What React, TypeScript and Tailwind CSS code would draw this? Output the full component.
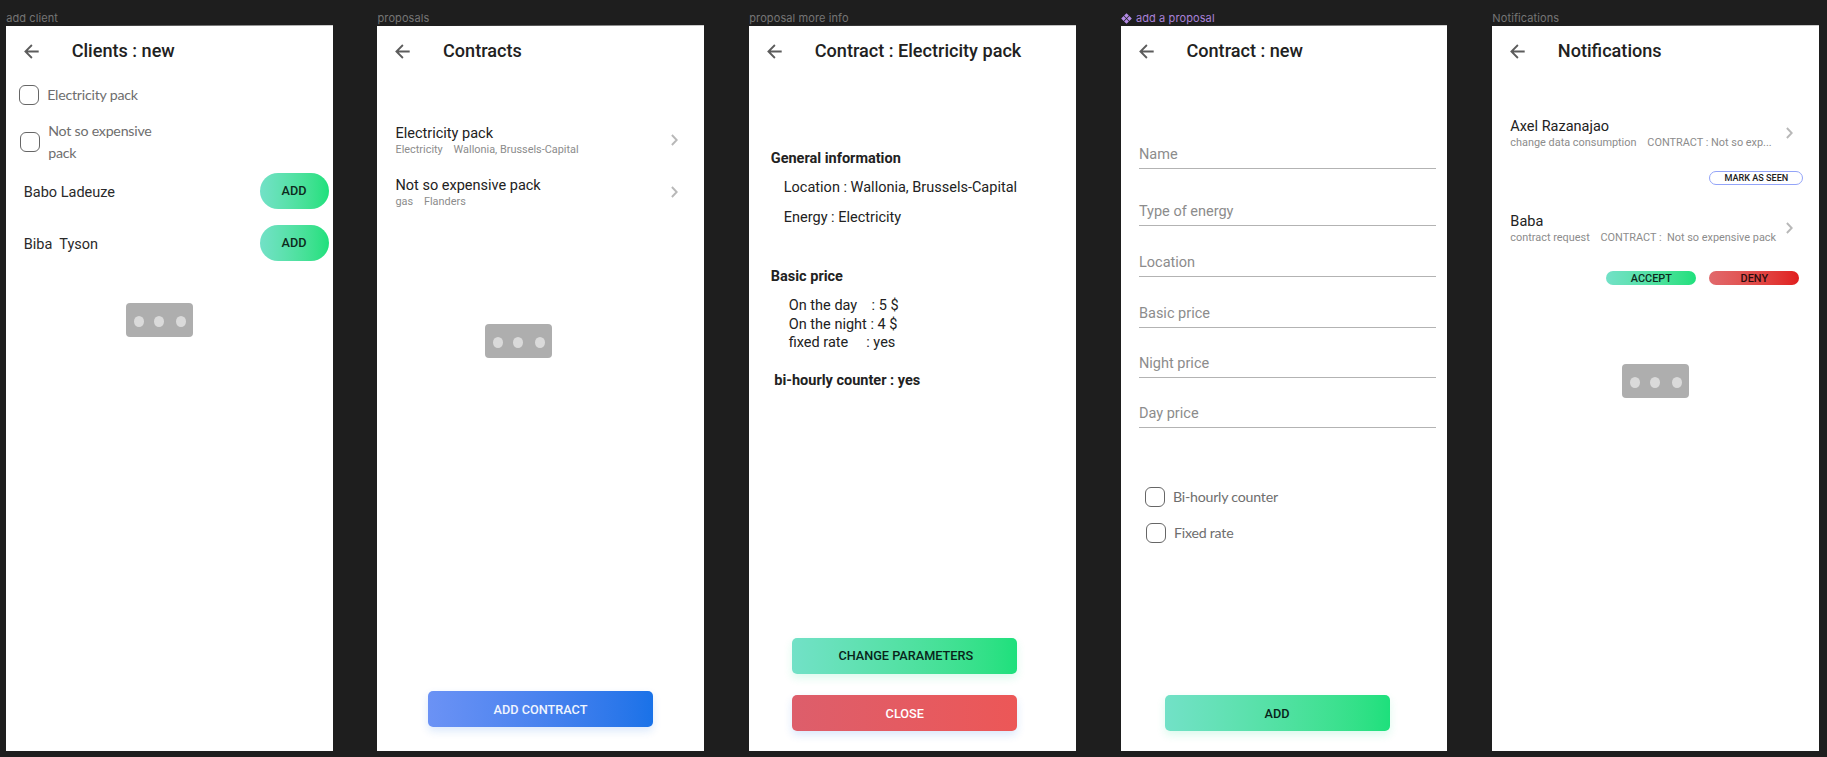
import React from "react";
import clsx from "clsx";

function BackArrow() {
  return (
    <svg className="h-[15px] w-[15px] shrink-0" viewBox="0 0 15 15" fill="none" stroke="#5c5c5c" strokeWidth="1.8">
      <path d="M14.7 7.5H1.6M7.9 1 1.4 7.5l6.5 6.5" />
    </svg>
  );
}

function Chevron() {
  return (
    <svg className="h-3 w-[7px] shrink-0" viewBox="0 0 7 12" fill="none" stroke="#b8b8b8" strokeWidth="1.9">
      <path d="M.9 1 5.7 6 .9 11" />
    </svg>
  );
}

function ComponentIcon() {
  return (
    <svg className="mr-1 h-[11px] w-[11px] shrink-0" viewBox="0 0 11 11" fill="#b48be6">
      <path d="M5.5.2 7.9 2.6 5.5 5 3.1 2.6zM5.5 6l2.4 2.4-2.4 2.4-2.4-2.4zM2.6 3.1 5 5.5 2.6 7.9.2 5.5zM8.4 3.1l2.4 2.4-2.4 2.4L6 5.5z" />
    </svg>
  );
}

type FrameProps = {
  label: string;
  title: string;
  component?: boolean;
  children: React.ReactNode;
};

function Frame({ label, title, component, children }: FrameProps) {
  return (
    <section className="flex w-[326.4px] flex-col">
      <div
        className={clsx(
          "flex h-[25px] items-center pt-[11px] font-['Inter'] text-[11px] leading-[14px] tracking-[0.1px]",
          component ? "text-[#a981d8]" : "text-[#757575]",
        )}
      >
        {component && <ComponentIcon />}
        {label}
      </div>
      <div className="h-px bg-linear-to-r from-[#1e1e1e] from-20% to-[#d0d0d0]" />
      <div className="flex h-[725px] flex-col bg-white">
        <header className="flex h-[50px] shrink-0 items-center pl-[18px]">
          <BackArrow />
          <h1 className="ml-[32.5px] text-[18.1px] font-medium leading-6 text-[#212121]">{title}</h1>
        </header>
        {children}
      </div>
    </section>
  );
}

function Checkbox({ label, className }: { label: string; className: string }) {
  return (
    <label className={clsx("flex items-center gap-2", className)}>
      <span className="h-5 w-5 shrink-0 rounded-[6px] border border-[#666]" />
      <span className="w-[120px] font-['Lato'] text-[14.2px] leading-[22px] tracking-[-0.23px] text-[#6e6e6e]">{label}</span>
    </label>
  );
}

function Client({ name, className }: { name: string; className: string }) {
  return (
    <div className={clsx("flex h-9 items-center justify-between pl-[17.6px] pr-1", className)}>
      <span className="whitespace-pre pt-1 text-[14.5px] leading-5 text-[#2a2a2a]">{name}</span>
      <button className="h-9 w-[69px] rounded-full bg-linear-to-r from-[#72e1c7] to-[#1de07c] text-[12.7px] font-medium text-[#0d2b1d]">
        ADD
      </button>
    </div>
  );
}

function Loader({ className }: { className: string }) {
  return (
    <div className={clsx("flex h-[34px] w-[67px] shrink-0 items-center rounded-[4px] bg-[#aeaeae] pl-2 pt-[2px]", className)}>
      <span className="h-[11px] w-[10px] rounded-[50%] bg-[#dadada]" />
      <span className="ml-[10px] h-[11px] w-[10px] rounded-[50%] bg-[#dadada]" />
      <span className="ml-3 h-[11px] w-[10px] rounded-[50%] bg-[#dadada]" />
    </div>
  );
}

function ListItem({ title, detail, className }: { title: string; detail: string; className: string }) {
  return (
    <div className={clsx("flex h-[34px] shrink-0 items-center justify-between pl-[18px]", className)}>
      <div className="whitespace-pre">
        <div className="h-5 text-[14.5px] leading-[22px] text-[#222]">{title}</div>
        <div className="text-[10.9px] leading-[14px] text-[#8c8c8c]">{detail}</div>
      </div>
      <Chevron />
    </div>
  );
}

function Field({ label, className }: { label: string; className: string }) {
  return (
    <div className={clsx("ml-[18px] w-[297px] shrink-0 border-b border-[#b3b3b3]", className)}>
      <div className="h-6 text-[14.5px] leading-[22px] text-[#8c8c8c]">{label}</div>
    </div>
  );
}

function WideButton({ label, className }: { label: string; className: string }) {
  return (
    <button className={clsx("h-9 w-[225px] shrink-0 rounded-[5px] bg-linear-to-r text-[12.7px] font-medium", className)}>
      {label}
    </button>
  );
}

export default function App() {
  return (
    <main className="grid h-[757px] w-[1827px] grid-cols-[371.3px_371.8px_371.7px_371.4px_327px] overflow-hidden bg-[#1e1e1e] pl-[6.2px] font-['Roboto',sans-serif]">
      <Frame label="add client" title="Clients : new">
        <Checkbox label="Electricity pack" className="ml-[13px] mt-2 h-[22px]" />
        <Checkbox label="Not so expensive pack" className="ml-[14px] mt-[25px] h-[22px]" />
        <Client name="Babo Ladeuze" className="mt-5" />
        <Client name="Biba  Tyson" className="mt-4" />
        <Loader className="ml-[120px] mt-[42px]" />
      </Frame>

      <Frame label="proposals" title="Contracts">
        <ListItem title="Electricity pack" detail="Electricity    Wallonia, Brussels-Capital" className="mt-[47px] pr-[26px]" />
        <ListItem title="Not so expensive pack" detail="gas    Flanders" className="mt-[18px] pr-[26px]" />
        <Loader className="ml-[107.5px] mt-[115px]" />
        <WideButton
          label="ADD CONTRACT"
          className="mb-6 ml-[50.5px] mt-auto from-[#6b92f5] to-[#1972e8] pt-px text-[#f0f5ff] shadow-[0_4px_8px_rgba(25,114,232,0.16)]"
        />
      </Frame>

      <Frame label="proposal more info" title="Contract : Electricity pack">
        <div className="mt-[73px] flex flex-col whitespace-pre text-[14.5px] leading-5 text-[#222]">
          <h2 className="ml-[21.5px] font-bold">General information</h2>
          <p className="ml-[34.5px] mt-[9px]">Location : Wallonia, Brussels-Capital</p>
          <p className="ml-[34.5px] mt-[10px]">Energy : Electricity</p>
          <h2 className="ml-[21.5px] mt-[39px] font-bold">Basic price</h2>
          <div className="ml-[39.5px] mt-[10px] leading-[18.7px]">
            <p>On the day    : 5 $</p>
            <p>On the night : 4 $</p>
            <p>fixed rate     : yes</p>
          </div>
          <p className="ml-[25px] mt-[18px] font-bold">bi-hourly counter : yes</p>
        </div>
        <WideButton
          label="CHANGE PARAMETERS"
          className="ml-[43px] mt-auto from-[#72e1c7] to-[#1de07c] pl-[2px] text-[#08251a] shadow-[0_4px_8px_rgba(29,224,140,0.16)]"
        />
        <WideButton
          label="CLOSE"
          className="mb-5 ml-[43px] mt-[21px] from-[#dd5e6b] to-[#ec5757] pt-px text-white shadow-[0_4px_8px_rgba(25,114,232,0.16)]"
        />
      </Frame>

      <Frame label="add a proposal" title="Contract : new" component>
        <Field label="Name" className="mt-[68px]" />
        <Field label="Type of energy" className="mt-8" />
        <Field label="Location" className="mt-[26px]" />
        <Field label="Basic price" className="mt-[26px]" />
        <Field label="Night price" className="mt-[25px]" />
        <Field label="Day price" className="mt-[25px]" />
        <Checkbox label="Bi-hourly counter" className="ml-6 mt-[58px] h-[22px]" />
        <Checkbox label="Fixed rate" className="ml-[25px] mt-[14px] h-[22px]" />
        <WideButton
          label="ADD"
          className="mb-5 ml-11 mt-auto from-[#72e1c7] to-[#1de07c] pr-px pt-px text-[#08251a] shadow-[0_4px_8px_rgba(29,224,140,0.16)]"
        />
      </Frame>

      <Frame label="Notifications" title="Notifications">
        <ListItem title="Axel Razanajao" detail="change data consumption    CONTRACT : Not so exp..." className="mt-10 pr-[26px]" />
        <button className="ml-[217px] mt-[21px] h-[14px] w-[94px] shrink-0 rounded-full border border-[#93a4f8] text-[9.1px] font-medium leading-3 text-[#222]">
          MARK AS SEEN
        </button>
        <ListItem title="Baba" detail="contract request    CONTRACT :  Not so expensive pack" className="mt-[26px] pr-[26px]" />
        <div className="mt-[26px] flex gap-[13px] pl-[114px] text-[10.9px] font-medium leading-[14px]">
          <button className="h-[14px] w-[90px] rounded-full bg-linear-to-r from-[#72e1c7] to-[#1de07c] pt-px text-[#0d2b1d]">
            ACCEPT
          </button>
          <button className="h-[14px] w-[90px] rounded-full bg-linear-to-r from-[#e1696c] to-[#e01c1d] pt-px text-[#2b0d0d]">
            DENY
          </button>
        </div>
        <Loader className="ml-[130px] mt-[79px]" />
      </Frame>
    </main>
  );
}
